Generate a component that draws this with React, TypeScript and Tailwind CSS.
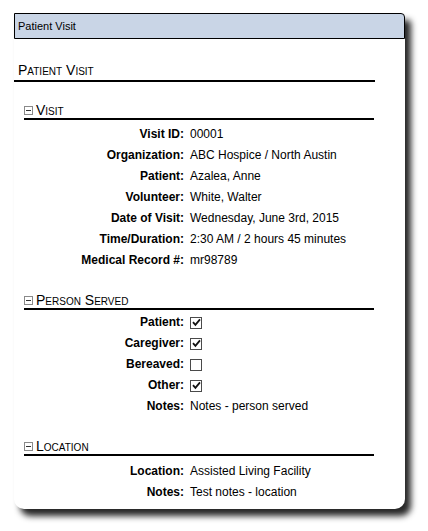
import React from 'react';

// rows of the visit card
const visitRows: [string, string][] = [
  ['Visit ID:', '00001'],
  ['Organization:', 'ABC Hospice / North Austin'],
  ['Patient:', 'Azalea, Anne'],
  ['Volunteer:', 'White, Walter'],
  ['Date of Visit:', 'Wednesday, June 3rd, 2015'],
  ['Time/Duration:', '2:30 AM / 2 hours 45 minutes'],
  ['Medical Record #:', 'mr98789'],
];

const servedRows: [string, boolean][] = [
  ['Patient:', true],
  ['Caregiver:', true],
  ['Bereaved:', false],
  ['Other:', true],
];

function CollapseIcon() {
  return (
    <span className="mt-[1px] flex h-[9px] w-[9px] shrink-0 items-center justify-center border border-[#8a8a8a] bg-white">
      <span className="h-[1px] w-[5px] bg-[#333]" />
    </span>
  );
}

function SectionHeader({ title, className = '' }: { title: string; className?: string }) {
  return (
    <div className={`flex items-center gap-[3px] border-b-2 border-black text-[14px] leading-[16px] [font-variant:small-caps] ${className}`}>
      <CollapseIcon />
      <span>{title}</span>
    </div>
  );
}

function Row({ label, children }: { label: string; children: React.ReactNode }) {
  return (
    <div className="flex h-[21px] items-center text-[12px] leading-[21px]">
      <span className="w-[160px] shrink-0 text-right font-bold">{label}</span>
      <span className="ml-[6px] flex items-center">{children}</span>
    </div>
  );
}

function Checkbox({ checked }: { checked: boolean }) {
  return (
    <span className="flex h-[12px] w-[12px] items-center justify-center border border-[#4a4a4a] bg-white">
      {checked && (
        <svg width="9" height="9" viewBox="0 0 9 9">
          <path d="M1 4.2 L3.4 6.8 L8 1.4" fill="none" stroke="#111" strokeWidth="1.8" />
        </svg>
      )}
    </span>
  );
}

export default function App() {
  return (
    <div className="min-h-[531px] bg-white pt-[13px] font-['Liberation_Sans',Arial,sans-serif] text-black">
      <div className="ml-[14px] w-[391px] rounded-tr-[4px] rounded-b-[10px] bg-white pb-[6px] shadow-[6px_7px_6px_rgba(0,0,0,0.85)]">
        <div className="flex h-[26px] items-center rounded-tr-[4px] border border-black bg-[#c9d5e6] pl-[3px] text-[11px]">
          Patient Visit
        </div>

        <div className="mr-[30px] mt-[23px] border-b-2 border-black pb-[2px] pl-[4px] text-[14px] leading-[16px] [font-variant:small-caps]">
          Patient Visit
        </div>

        <div className="ml-[10px] w-[350px]">
          <SectionHeader title="Visit" className="mt-[20px]" />
          <div className="mt-[4px]">
            {visitRows.map(([label, value]) => (
              <Row key={label} label={label}>{value}</Row>
            ))}
          </div>

          <SectionHeader title="Person Served" className="mt-[21px]" />
          <div className="mt-[2px]">
            {servedRows.map(([label, checked]) => (
              <Row key={label} label={label}>
                <Checkbox checked={checked} />
              </Row>
            ))}
            <Row label="Notes:">Notes - person served</Row>
          </div>

          <SectionHeader title="Location" className="mt-[21px]" />
          <div className="mt-[5px]">
            <Row label="Location:">Assisted Living Facility</Row>
            <Row label="Notes:">Test notes - location</Row>
          </div>
        </div>
      </div>
    </div>
  );
}
